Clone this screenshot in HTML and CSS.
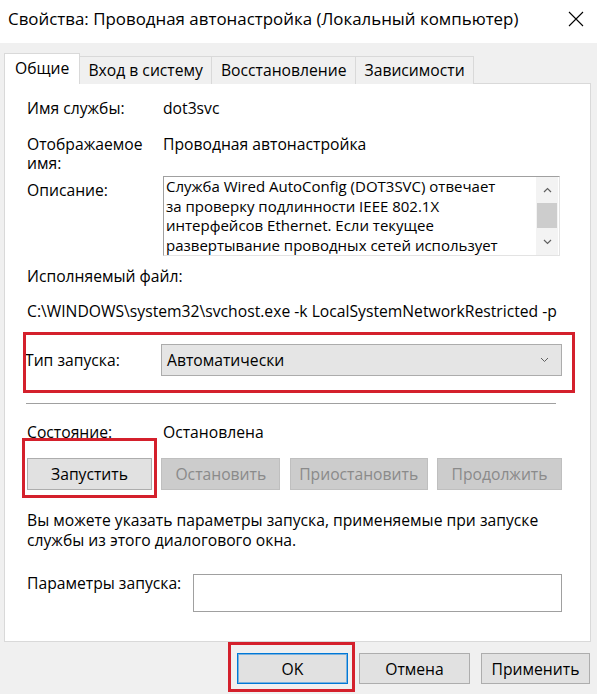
FILE: index.html
```html
<!DOCTYPE html>
<html lang="ru">
<head>
<meta charset="utf-8">
<title>Свойства: Проводная автонастройка</title>
<link rel="stylesheet" href="styles.css">
</head>
<body>
<div class="window">
  <header class="titlebar">
    <span class="title">Свойства: Проводная автонастройка (Локальный компьютер)</span>
    <svg class="close" width="16" height="16" viewBox="0 0 16 16"><path d="M1 1 L15 15 M15 1 L1 15" stroke="#000" stroke-width="1.1" fill="none"/></svg>
  </header>

  <nav class="tabs">
    <div class="tab active">Общие</div>
    <div class="tab">Вход в систему</div>
    <div class="tab">Восстановление</div>
    <div class="tab">Зависимости</div>
  </nav>

  <section class="panel">
    <div class="row r-name">
      <span>Имя службы:</span>
      <span>dot3svc</span>
    </div>
    <div class="row r-display">
      <span class="two-line">Отображаемое<br>имя:</span>
      <span>Проводная автонастройка</span>
    </div>
    <div class="row r-desc">
      <span class="desc-label">Описание:</span>
      <div class="descbox">
        <div class="desctext">Служба Wired AutoConfig (DOT3SVC) отвечает<br>за проверку подлинности IEEE 802.1X<br>интерфейсов Ethernet. Если текущее<br>развертывание проводных сетей использует</div>
        <div class="scrollbar">
          <div class="sb-btn"><svg width="9" height="6" viewBox="0 0 9 6"><path d="M1 5 L4.5 1.5 L8 5" stroke="#606060" stroke-width="1.2" fill="none"/></svg></div>
          <div class="sb-thumb"></div>
          <div class="sb-track"></div>
          <div class="sb-btn"><svg width="9" height="6" viewBox="0 0 9 6"><path d="M1 1 L4.5 4.5 L8 1" stroke="#606060" stroke-width="1.2" fill="none"/></svg></div>
        </div>
      </div>
    </div>
    <div class="line r-exe">Исполняемый файл:</div>
    <div class="line r-path">C:\WINDOWS\system32\svchost.exe -k LocalSystemNetworkRestricted -p</div>

    <div class="row r-start mark mark-start">
      <span class="start-label">Тип запуска:</span>
      <div class="combo">
        <span>Автоматически</span>
        <svg width="9" height="6" viewBox="0 0 9 6"><path d="M1 1 L4.5 4.5 L8 1" stroke="#606060" stroke-width="1" fill="none"/></svg>
      </div>
    </div>

    <hr class="sep">

    <div class="row r-state">
      <span>Состояние:</span>
      <span>Остановлена</span>
    </div>

    <div class="svc-buttons">
      <div class="mark mark-run"><button class="btn">Запустить</button></div>
      <button class="btn disabled">Остановить</button>
      <button class="btn disabled">Приостановить</button>
      <button class="btn disabled">Продолжить</button>
    </div>

    <p class="hint">Вы можете указать параметры запуска, применяемые при запуске<br>службы из этого диалогового окна.</p>

    <div class="params">
      <span>Параметры запуска:</span>
      <div class="input"></div>
    </div>
  </section>

  <footer class="footer">
    <div class="mark mark-ok"><button class="btn dlg default">OK</button></div>
    <button class="btn dlg">Отмена</button>
    <button class="btn dlg apply">Применить</button>
  </footer>
</div>
</body>
</html>
```

FILE: styles.css
```css
* { box-sizing: border-box; }

html, body {
  margin: 0;
  padding: 0;
}

body {
  width: 597px;
  height: 694px;
  overflow: hidden;
  background: #f0f0f0;
  font-family: "Open Sans", "Noto Sans", "Liberation Sans", sans-serif;
  font-size: 15.7px;
  line-height: 18px;
  color: #000;
}

.titlebar {
  height: 43px;
  background: #fff;
  display: flex;
  justify-content: space-between;
  align-items: flex-start;
  padding: 8px 13px 0 8px;
}

.title {
  font-size: 16.9px;
  line-height: 22px;
}

.close {
  margin-top: 3px;
}

.tabs {
  display: flex;
  align-items: flex-end;
  margin: 10px 6px -1px 4px;
  height: 31px;
}

.tab {
  height: 28px;
  padding: 4px 8px 0 9px;
  line-height: 19px;
  background: #f0f0f0;
  border: 1px solid #d9d9d9;
  border-bottom: none;
  margin-left: -1px;
}

.tab.active {
  height: 31px;
  padding: 5px 10px 0 10px;
  background: #fff;
  margin-left: 0;
  margin-right: -1px;
  position: relative;
  z-index: 1;
}

.panel {
  margin: 0 6px 0 4px;
  background: #fff;
  border: 1px solid #d9d9d9;
  padding: 15px 28px 29px 22px;
}

.row {
  display: grid;
  grid-template-columns: 136px 1fr;
}

.r-display { margin-top: 18px; }

.two-line { line-height: 19px; }

.r-desc { margin-top: 3px; }

.desc-label { padding-top: 5px; }

.descbox {
  height: 80px;
  margin-right: 2px;
  display: flex;
  border-top: 1px solid #a0a0a0;
  border-left: 1px solid #a0a0a0;
  border-right: 1px solid #e3e3e3;
  border-bottom: 1px solid #e3e3e3;
  background: #fff;
}

.desctext {
  flex: 1;
  padding: 0 0 0 2px;
  font-size: 15px;
  line-height: 19.5px;
  overflow: hidden;
  white-space: nowrap;
}

.scrollbar {
  width: 22px;
  margin-right: 1px;
  display: flex;
  flex-direction: column;
  background: #f3f3f3;
}

.sb-btn {
  height: 26px;
  display: flex;
  align-items: center;
  justify-content: center;
}

.sb-thumb {
  height: 25px;
  margin: 0 1px;
  background: #cdcdcd;
}

.sb-track { flex: 1; }

.r-exe { margin-top: 11px; }

.r-path { margin-top: 17px; }

.r-start {
  margin-top: 24px;
  align-items: center;
}

.start-label { margin-left: -2px; }

.combo {
  height: 32px;
  margin-left: -2px;
  display: flex;
  align-items: center;
  justify-content: space-between;
  padding: 0 12px 0 5px;
  background: #e5e5e5;
  border: 1px solid #acacac;
}

.sep {
  margin: 27px 6px 0 -1px;
  border: none;
  border-top: 1px solid #a0a0a0;
  height: 0;
}

.r-state { margin-top: 19px; }

.svc-buttons {
  margin-top: 17px;
  display: grid;
  grid-template-columns: 125px 119px 138px 125px;
  justify-content: space-between;
}

.btn {
  height: 32px;
  width: 100%;
  font-family: inherit;
  font-size: 15.7px;
  color: #000;
  background: #e1e1e1;
  border: 1px solid #adadad;
  padding: 0;
}

.btn.disabled {
  background: #cccccc;
  border-color: #bfbfbf;
  color: #8a8a8a;
}

.hint {
  margin: 20px 0 0;
  line-height: 20px;
}

.params {
  margin-top: 24px;
  display: grid;
  grid-template-columns: 166px 1fr;
  align-items: start;
}

.input {
  height: 38px;
  background: #fff;
  border: 1px solid #a0a0a0;
}

.footer {
  display: flex;
  justify-content: flex-end;
  gap: 11px;
  margin-top: 11px;
  padding-right: 7px;
}

.btn.dlg {
  width: 111px;
  height: 31px;
}

.btn.apply { width: 109px; }

.btn.default {
  border: 1px solid #0078d7;
  box-shadow: inset 0 0 0 1px rgba(0, 120, 215, 0.45);
}

/* red annotation frames drawn over the screenshot */
.mark { position: relative; }

.mark::after {
  content: "";
  position: absolute;
  border: 3px solid #d4202c;
  pointer-events: none;
}

.mark-start::after {
  top: -12px;
  left: -4px;
  right: -13px;
  bottom: -17px;
}

.mark-run::after {
  top: -20px;
  left: -5px;
  right: -5px;
  bottom: -8px;
}

.mark-ok::after {
  top: -11px;
  left: -9px;
  right: -7px;
  bottom: -8px;
}
```
